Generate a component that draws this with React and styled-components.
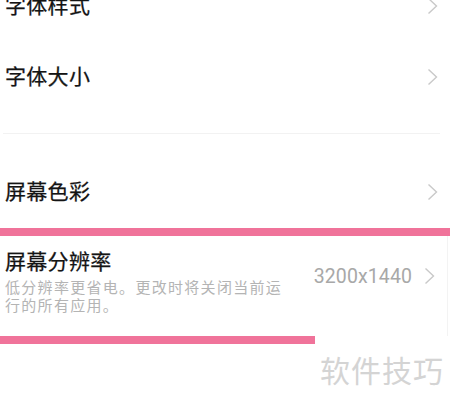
import React from "react";
import styled, { createGlobalStyle } from "styled-components";

const PINK = "#f0739a";
const FONT = `"Noto Sans CJK SC", "Noto Sans", sans-serif`;

const GlobalStyle = createGlobalStyle`
  html, body {
    margin: 0;
    padding: 0;
    background: #ffffff;
    overflow: hidden;
  }
  body {
    font-family: ${FONT};
  }
`;

const Page = styled.div`
  width: 450px;
  height: 402px;
  overflow: hidden;
  background: #fff;
`;

const Group = styled.div`
  display: flex;
  flex-direction: column;
  margin-top: ${(p) => p.$offset || 0}px;
`;

const Row = styled.div`
  display: flex;
  align-items: center;
  justify-content: space-between;
  height: ${(p) => p.$height || 71}px;
  padding: 0 12px 0 5px;
  box-sizing: border-box;
`;

const Title = styled.div`
  font-size: 21px;
  line-height: 24px;
  color: #141414;
  letter-spacing: 0.3px;
  margin-bottom: 4px;
  -webkit-text-stroke: 0.25px #141414;
`;

const Divider = styled.div`
  height: 1px;
  background: #f2f2f2;
  margin: 21px 10px 0 3px;
`;

const Spacer = styled.div`
  height: ${(p) => p.$h}px;
`;

const Highlight = styled.div`
  height: 8px;
  width: ${(p) => p.$width || "100%"};
  background: ${PINK};
`;

const DetailRow = styled.div`
  display: flex;
  align-items: center;
  justify-content: space-between;
  padding: 12px 12px 22px 5px;
  margin-right: 2px;
  border-right: 1px solid #f3f3f3;
`;

const TextBlock = styled.div`
  display: flex;
  flex-direction: column;
  gap: 2px;
  width: 284px;
`;

const Hint = styled.div`
  font-size: 15px;
  line-height: 18px;
  letter-spacing: 1.3px;
  color: #b4b4b4;
`;

const Trailing = styled.div`
  display: flex;
  align-items: center;
  gap: 12px;
  margin-bottom: 10px;
`;

const Value = styled.span`
  font-family: Roboto, "Noto Sans", sans-serif;
  font-size: 19.5px;
  color: #a8a8a8;
  letter-spacing: 0.1px;
`;

const Watermark = styled.div`
  align-self: flex-end;
  margin-top: 8px;
  padding-right: 6px;
  font-size: 30px;
  line-height: 34px;
  letter-spacing: 1px;
  color: #d4d4d4;
`;

function Chevron() {
  return (
    <svg width="11" height="18" viewBox="0 0 11 18">
      <polyline
        points="1.5,1.5 9.5,9 1.5,16.5"
        fill="none"
        stroke="#c9c9c9"
        strokeWidth="1.4"
      />
    </svg>
  );
}

const topRows = ["字体样式", "字体大小"];

export default function App() {
  return (
    <Page>
      <GlobalStyle />
      <Group $offset={-30}>
        {topRows.map((t) => (
          <Row key={t}>
            <Title>{t}</Title>
            <Chevron />
          </Row>
        ))}
        <Divider />
      </Group>

      <Group>
        <Spacer $h={22} />
        <Row $height={72}>
          <Title>屏幕色彩</Title>
          <Chevron />
        </Row>
        <Highlight />
        <DetailRow>
          <TextBlock>
            <Title>屏幕分辨率</Title>
            <Hint>低分辨率更省电。更改时将关闭当前运行的所有应用。</Hint>
          </TextBlock>
          <Trailing>
            <Value>3200x1440</Value>
            <Chevron />
          </Trailing>
        </DetailRow>
        <Highlight $width="315px" />
        <Watermark>软件技巧</Watermark>
      </Group>
    </Page>
  );
}
